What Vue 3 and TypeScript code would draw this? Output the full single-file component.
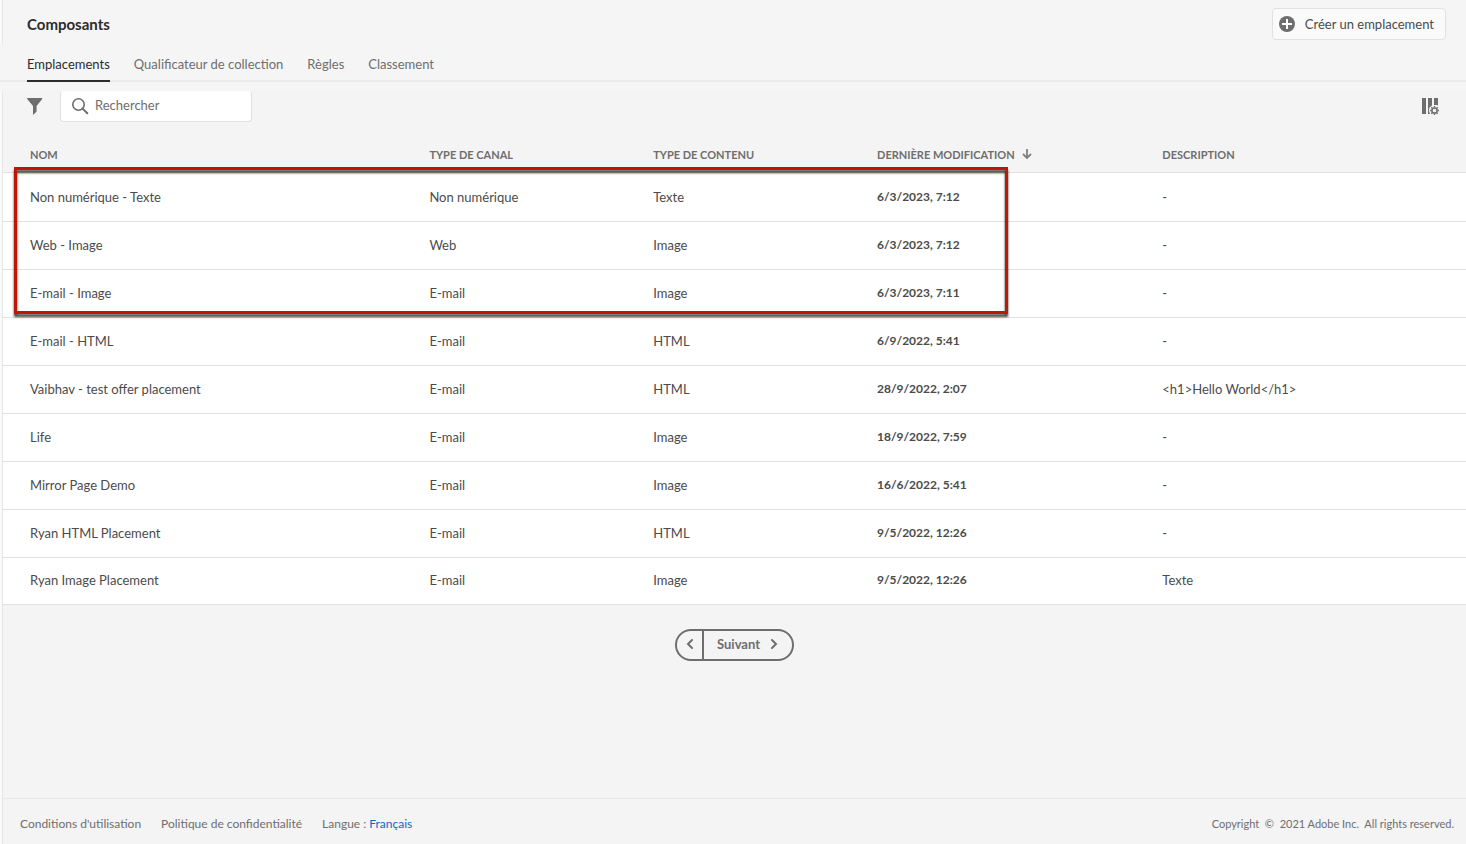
<script setup lang="ts">
import { ref } from 'vue'

interface Placement {
  name: string
  channel: string
  content: string
  modified: string
  description: string
}

const tabs: string[] = ['Emplacements', 'Qualificateur de collection', 'Règles', 'Classement']
const activeTab = ref<string>('Emplacements')
const query = ref<string>('')

const placements: Placement[] = [
  { name: 'Non numérique - Texte', channel: 'Non numérique', content: 'Texte', modified: '6/3/2023, 7:12', description: '-' },
  { name: 'Web - Image', channel: 'Web', content: 'Image', modified: '6/3/2023, 7:12', description: '-' },
  { name: 'E-mail - Image', channel: 'E-mail', content: 'Image', modified: '6/3/2023, 7:11', description: '-' },
  { name: 'E-mail - HTML', channel: 'E-mail', content: 'HTML', modified: '6/9/2022, 5:41', description: '-' },
  { name: 'Vaibhav - test offer placement', channel: 'E-mail', content: 'HTML', modified: '28/9/2022, 2:07', description: '<h1>Hello World</h1>' },
  { name: 'Life', channel: 'E-mail', content: 'Image', modified: '18/9/2022, 7:59', description: '-' },
  { name: 'Mirror Page Demo', channel: 'E-mail', content: 'Image', modified: '16/6/2022, 5:41', description: '-' },
  { name: 'Ryan HTML Placement', channel: 'E-mail', content: 'HTML', modified: '9/5/2022, 12:26', description: '-' },
  { name: 'Ryan Image Placement', channel: 'E-mail', content: 'Image', modified: '9/5/2022, 12:26', description: 'Texte' },
]
</script>

<template>
  <div class="page">
    <header class="header">
      <h1>Composants</h1>
      <button class="create" type="button">
        <svg width="16" height="16" viewBox="0 0 16 16" aria-hidden="true">
          <circle cx="8" cy="8" r="8" fill="#6e6e6e" />
          <path d="M8 3v10M3 8h10" stroke="#fff" stroke-width="2" />
        </svg>
        <span>Créer un emplacement</span>
      </button>
    </header>

    <nav class="tabs">
      <div class="tab-list">
        <a
          v-for="tab in tabs"
          :key="tab"
          href="#"
          :class="['tab', { active: tab === activeTab }]"
          @click.prevent="activeTab = tab"
        >{{ tab }}</a>
      </div>
    </nav>

    <main class="main">
      <div class="toolbar">
        <button class="icon-button" type="button" aria-label="Filtrer">
          <svg width="16" height="17" viewBox="0 0 16 17" aria-hidden="true">
            <path d="M0.600 0H14.800C15.300 0 15.500 0.500 15.200 0.900L9.600 8V13.400L6.700 16.600C6.400 16.900 6 16.700 6 16.300V8L0.200 0.900C-0.100 0.500 0.100 0 0.600 0Z" fill="#6e6e6e" />
          </svg>
        </button>
        <label class="search">
          <svg width="18" height="18" viewBox="0 0 18 18" fill="none" stroke="#6e6e6e" aria-hidden="true">
            <circle cx="7.500" cy="7.500" r="5.700" stroke-width="1.600" />
            <path d="M11.600 11.600L16.300 16.300" stroke-width="2" stroke-linecap="round" />
          </svg>
          <input v-model="query" type="text" placeholder="Rechercher" aria-label="Rechercher" />
        </label>
        <button class="icon-button columns" type="button" aria-label="Configurer les colonnes">
          <svg width="18" height="18" viewBox="0 0 18 18" aria-hidden="true">
            <path d="M0 0h4v16H0zM6 0h4v7.500L7.500 9.500 6.800 12.500 8 16H6zM12 0h4v7.600L14.500 7h-2.500z" fill="#6e6e6e" />
            <circle cx="12.500" cy="12.500" r="2.600" fill="none" stroke="#6e6e6e" stroke-width="1.500" />
            <path d="M12.500 8v1.600M12.500 15.400V17M8 12.500h1.600M15.400 12.500H17M9.300 9.300l1.200 1.200M14.500 14.500l1.200 1.200M9.300 15.700l1.200-1.200M14.500 10.500l1.200-1.200" stroke="#6e6e6e" stroke-width="1.400" />
          </svg>
        </button>
      </div>

      <div class="table-area">
        <table>
          <colgroup>
            <col class="col-name" />
            <col class="col-channel" />
            <col class="col-content" />
            <col class="col-modified" />
            <col />
          </colgroup>
          <thead>
            <tr>
              <th scope="col">NOM</th>
              <th scope="col">TYPE DE CANAL</th>
              <th scope="col">TYPE DE CONTENU</th>
              <th scope="col" aria-sort="descending">
                <button class="sort" type="button">
                  DERNIÈRE MODIFICATION
                  <svg width="10" height="12" viewBox="0 0 10 12" fill="none" stroke="#808080" aria-hidden="true">
                    <path d="M5 0v9M1 5l4 4 4-4" stroke-width="1.800" />
                  </svg>
                </button>
              </th>
              <th scope="col">DESCRIPTION</th>
            </tr>
          </thead>
          <tbody>
            <tr v-for="row in placements" :key="row.name">
              <td>{{ row.name }}</td>
              <td>{{ row.channel }}</td>
              <td>{{ row.content }}</td>
              <td class="date">{{ row.modified }}</td>
              <td>{{ row.description }}</td>
            </tr>
          </tbody>
        </table>
        <div class="highlight" aria-hidden="true"></div>
      </div>

      <div class="pager">
        <button class="prev" type="button" aria-label="Précédent">
          <svg width="8" height="12" viewBox="0 0 8 12" fill="none" stroke="#6e6e6e" stroke-width="2" stroke-linecap="round" aria-hidden="true">
            <path d="M6 2L2 6l4 4" />
          </svg>
        </button>
        <button class="next" type="button">
          Suivant
          <svg width="8" height="12" viewBox="0 0 8 12" fill="none" stroke="#6e6e6e" stroke-width="2" stroke-linecap="round" aria-hidden="true">
            <path d="M2 2l4 4-4 4" />
          </svg>
        </button>
      </div>

      <footer class="footer">
        <a href="#">Conditions d'utilisation</a>
        <a href="#">Politique de confidentialité</a>
        <span>Langue : <a class="language" href="#">Français</a></span>
        <span class="copyright">Copyright &nbsp;© &nbsp;2021 Adobe Inc. &nbsp;All rights reserved.</span>
      </footer>
    </main>
  </div>
</template>

<style>
body {
  margin: 0;
  background: #fafafa;
}
</style>

<style scoped>
.page {
  display: flex;
  flex-direction: column;
  min-height: 100vh;
  font-family: Lato, "Noto Sans", sans-serif;
  font-size: 13px;
  line-height: 20px;
  color: #4b4b4b;
}

button {
  margin: 0;
  padding: 0;
  border: 0;
  background: none;
  font: inherit;
  color: inherit;
  cursor: pointer;
}

svg {
  display: block;
  flex: none;
}

a {
  color: inherit;
  text-decoration: none;
}

.header {
  display: flex;
  align-items: flex-start;
  justify-content: space-between;
  box-sizing: border-box;
  height: 44px;
  margin-left: 2px;
  padding: 8px 20px 0 24px;
  border-left: 1px solid #e6e6e6;
  background: #f5f5f5;
}

h1 {
  margin: 0;
  font-size: 15px;
  line-height: 32px;
  font-weight: 700;
  color: #2c2c2c;
}

.create {
  display: flex;
  align-items: center;
  gap: 10px;
  height: 32px;
  padding: 0 11px 0 6px;
  border: 1px solid #e1e1e1;
  border-radius: 4px;
  background: #fafafa;
}

.tabs {
  padding-bottom: 9px;
  background: #f5f5f5;
}

.tab-list {
  display: flex;
  gap: 24px;
  height: 36px;
  padding-left: 27px;
  border-bottom: 2px solid #eaeaea;
}

.tab {
  height: 36px;
  line-height: 40px;
  color: #6e6e6e;
  border-bottom: 2px solid transparent;
}

.tab.active {
  color: #2c2c2c;
  border-bottom-color: #2c2c2c;
}

.main {
  display: flex;
  flex: 1;
  flex-direction: column;
  margin-left: 2px;
  border-left: 1px solid #e6e6e6;
  background: #f4f4f4;
}

.toolbar {
  display: flex;
  align-items: center;
  gap: 17px;
  height: 31px;
  padding: 0 26px 0 24px;
}

.columns {
  margin-left: auto;
}

.search {
  display: flex;
  align-items: center;
  gap: 6px;
  box-sizing: border-box;
  width: 192px;
  height: 31px;
  padding: 0 10px 2px;
  border: 1px solid #e1e1e1;
  border-top-color: #fff;
  border-radius: 4px;
  background: #fff;
}

.search input {
  flex: 1;
  min-width: 0;
  padding: 0 0 2px;
  border: 0;
  outline: 0;
  background: transparent;
  font: inherit;
  color: inherit;
}

.search input::placeholder {
  color: #6e6e6e;
  opacity: 1;
}

.table-area {
  position: relative;
  padding-top: 16px;
}

table {
  width: 100%;
  table-layout: fixed;
  border-collapse: separate;
  border-spacing: 0;
}

.col-name {
  width: 27.3%;
}

.col-channel {
  width: 15.3%;
}

.col-content {
  width: 15.3%;
}

.col-modified {
  width: 19.5%;
}

th,
td {
  box-sizing: border-box;
  height: 48px;
  padding: 0 0 0 27px;
  border-bottom: 1px solid #e1e1e1;
  text-align: left;
  white-space: nowrap;
}

th {
  height: 35px;
  font-size: 11px;
  font-weight: 700;
  color: #6e6e6e;
}

td {
  padding-bottom: 2px;
  background: #fff;
}

tbody tr:first-child td {
  height: 49px;
  padding-bottom: 0;
}

tbody tr:last-child td {
  height: 47px;
}

.date {
  font-size: 12px;
  font-weight: 700;
}

.sort {
  display: flex;
  align-items: center;
  gap: 7px;
}

/* Callout frame around the first three rows */
.highlight {
  position: absolute;
  top: 45px;
  right: 31.3%;
  left: 11px;
  box-sizing: border-box;
  height: 147px;
  border: 3px solid #c11505;
  filter: drop-shadow(0 3px 1px rgba(0, 0, 0, 0.75));
  pointer-events: none;
}

.pager {
  display: flex;
  align-self: center;
  box-sizing: border-box;
  height: 32px;
  margin-top: 24px;
  border: 2px solid #6e6e6e;
  border-radius: 16px;
}

.prev {
  display: flex;
  align-items: center;
  padding: 0 8px 2px 9px;
  border-right: 2px solid #6e6e6e;
}

.next {
  display: flex;
  align-items: center;
  gap: 10px;
  padding: 0 14px 2px 13px;
  font-weight: 700;
  color: #6e6e6e;
}

.footer {
  display: flex;
  align-items: center;
  gap: 20px;
  box-sizing: border-box;
  height: 46px;
  margin-top: auto;
  padding: 4px 12px 0 17px;
  border-top: 1px solid #e8e8e8;
  font-size: 12px;
  color: #6e6e6e;
}

.language {
  color: #0d66d0;
}

.copyright {
  margin-left: auto;
  font-size: 11px;
}
</style>
